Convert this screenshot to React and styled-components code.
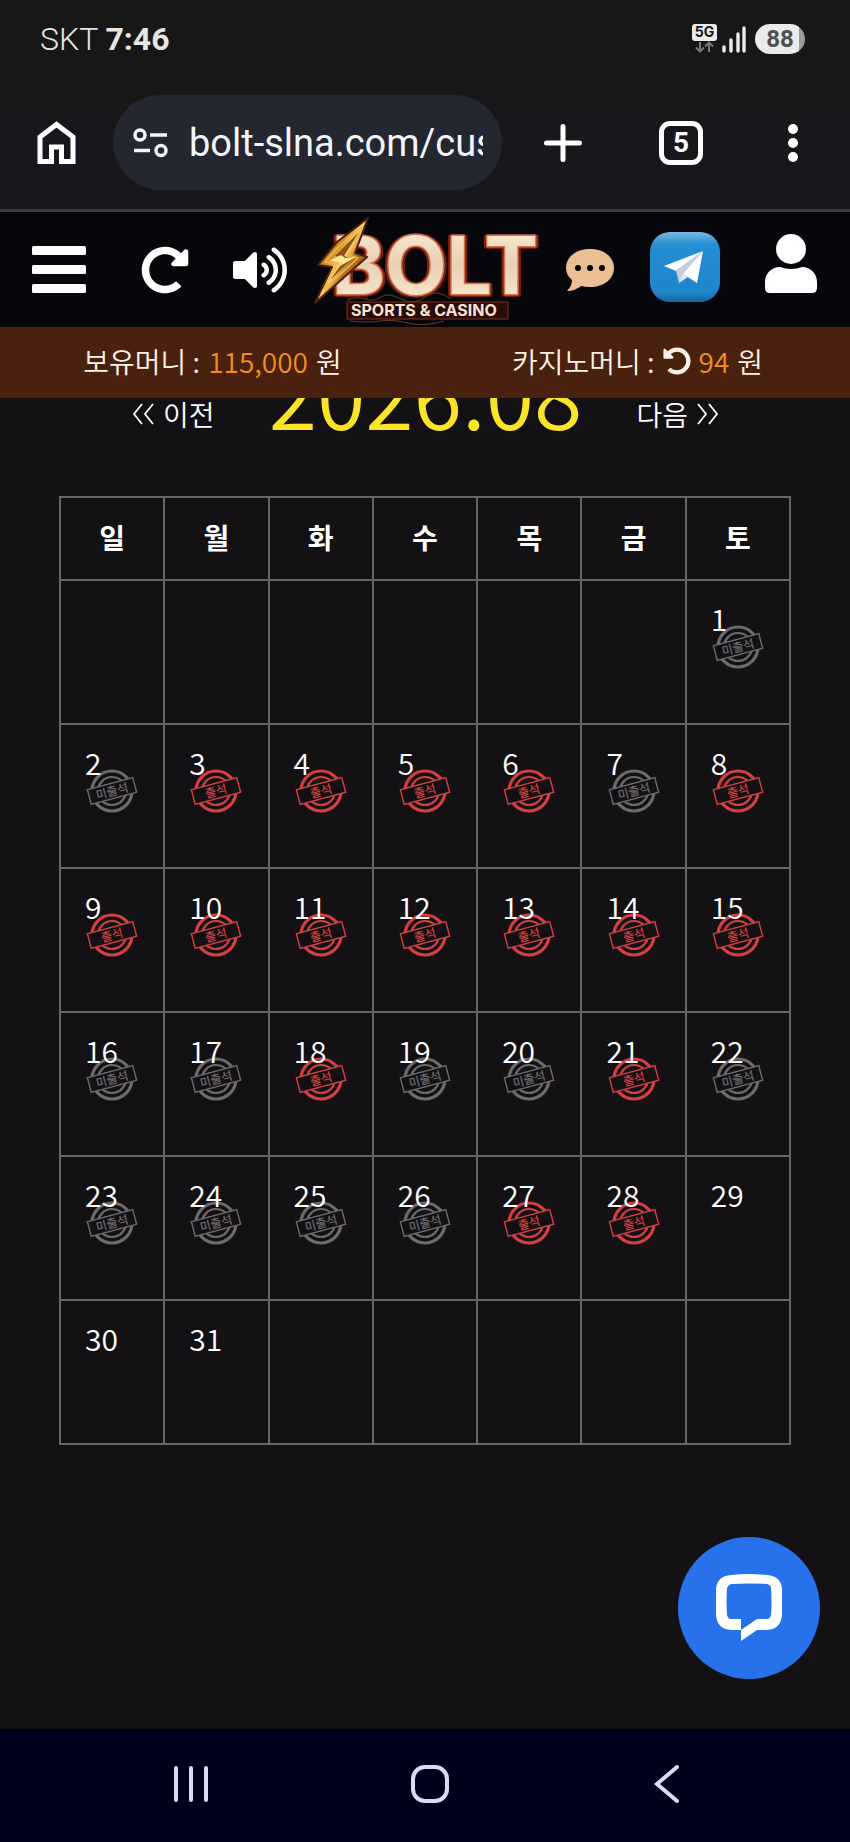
import React from "react";
import styled, { createGlobalStyle } from "styled-components";
import { FaRedoAlt, FaUndoAlt, FaVolumeUp } from "react-icons/fa";

const GlobalStyle = createGlobalStyle`
  * {
    box-sizing: border-box;
  }

  body {
    margin: 0;
    background: #131114;
    color: #fff;
    font-family: "Noto Sans CJK KR", sans-serif;
    font-weight: 350;
  }

  button {
    border: 0;
    padding: 0;
    background: none;
    color: inherit;
    font: inherit;
    cursor: pointer;
  }

  a {
    color: inherit;
    text-decoration: none;
  }

  svg {
    display: block;
    flex: none;
  }
`;

const Phone = styled.div`
  display: flex;
  flex-direction: column;
  min-height: 100vh;
`;

/* phone status bar */
const StatusBar = styled.div`
  display: flex;
  align-items: center;
  justify-content: space-between;
  height: 80px;
  padding: 0 45px 2px 40px;
  background: #171717;
  color: #e6e6e6;
  font-family: Roboto, sans-serif;
  font-size: 32px;
  font-weight: 300;

  b {
    font-weight: 700;
  }
`;

const StatusIcons = styled.div`
  display: flex;
  align-items: center;
  gap: 9px;
`;

const Battery = styled.span`
  width: 50px;
  border-radius: 15px;
  background: linear-gradient(90deg, #ebebeb 88%, #9b9b9b 88%);
  color: #505050;
  font-size: 24px;
  font-weight: 700;
  line-height: 30px;
  text-align: center;
`;

/* browser toolbar */
const BrowserBar = styled.div`
  display: flex;
  align-items: center;
  height: 132px;
  padding: 0 44px 4px 36px;
  background: linear-gradient(#171717, #17171c 40%);
  border-bottom: 3px solid #39393d;
`;

const AddressBar = styled.label`
  display: flex;
  flex: 1;
  align-items: center;
  gap: 20px;
  height: 95px;
  min-width: 0;
  margin: 0 42px 0 36px;
  padding: 0 19px;
  border-radius: 48px;
  background: #242630;

  input {
    flex: 1;
    min-width: 0;
    padding: 0;
    border: 0;
    outline: 0;
    background: none;
    color: #f3f5fb;
    font-family: Roboto, sans-serif;
    font-size: 38px;
    font-weight: 400;
  }
`;

const BrowserTools = styled.div`
  display: flex;
  align-items: center;
  gap: 77px;
`;

const TabCount = styled.button`
  && {
    width: 44px;
    height: 44px;
    border: 5px solid #fff;
    border-radius: 11px;
    font-family: Roboto, sans-serif;
    font-size: 28px;
    font-weight: 700;
    line-height: 34px;
  }
`;

const SiteHeader = styled.header`
  position: relative;
  z-index: 2;
`;

const HeaderRow = styled.div`
  display: grid;
  grid-template-columns: 5fr 4fr 4fr 10fr 4fr 4fr 5fr;
  align-items: center;
  justify-items: center;
  height: 115px;
  background: #07070b;
`;

const MoneyBar = styled.div`
  display: flex;
  align-items: center;
  height: 71px;
  padding-bottom: 4px;
  background: #4a200f;
  font-size: 28px;
`;

const Money = styled.div`
  display: flex;
  flex: 1;
  align-items: center;
  justify-content: center;
  gap: 8px;
  color: #fff4ea;

  strong {
    color: #f0901c;
    font-weight: 350;
  }
`;

/* attendance calendar */
const Main = styled.main`
  position: relative;
  flex: 1;
  padding: 0 59px;
`;

const MonthNav = styled.div`
  display: flex;
  align-items: flex-end;
  justify-content: space-between;
  height: 96px;
  margin: -60px 0 62px;
  padding: 0 72px 0 73px;
  white-space: nowrap;
`;

const MonthLink = styled.a`
  display: flex;
  align-items: center;
  gap: 9px;
  font-size: 28px;
  line-height: 40px;
`;

const Month = styled.h1`
  margin: 0;
  color: #fae428;
  font-size: 88px;
  font-weight: 350;
  line-height: 84px;
`;

const Calendar = styled.table`
  width: 100%;
  table-layout: fixed;
  border-collapse: collapse;

  th,
  td {
    border: 2px solid #666569;
  }

  th {
    height: 83px;
    padding: 0 0 4px;
    font-size: 28px;
    font-weight: 700;
    line-height: 40px;
  }

  td {
    height: 144px;
    padding: 25px 0 0;
    vertical-align: top;
    font-size: 30px;
    line-height: 24px;
  }
`;

const DayNumber = styled.div`
  position: relative;
  z-index: 1;
  padding-left: 24px;
`;

const StampMark = styled.svg`
  margin: -6px auto 0;
  color: ${(props) => (props.$attended ? "#d2403f" : "#6c6a6d")};
`;

const LogoWord = styled.text`
  font-family: Inter, sans-serif;
  font-size: 80px;
  font-weight: 700;
  fill: url(#cream);
  stroke: #cf7650;
  stroke-width: 3px;
  stroke-linejoin: round;
  paint-order: stroke;
  filter: drop-shadow(2px 0 0 #7c1d10) drop-shadow(-2px 0 0 #7c1d10)
    drop-shadow(0 1px 0 #7c1d10);
`;

const ChatButton = styled.button`
  && {
    position: absolute;
    right: 30px;
    bottom: 50px;
    display: flex;
    align-items: center;
    justify-content: center;
    width: 142px;
    height: 142px;
    border-radius: 50%;
    background: #2772ea;
  }
`;

const SystemNav = styled.nav`
  display: flex;
  align-items: center;
  justify-content: space-between;
  height: 113px;
  padding: 0 170px 4px 173px;
  background: #00001d;
`;

const WEEKDAYS = ["일", "월", "화", "수", "목", "금", "토"];
const FIRST_WEEKDAY = 6;
const DAYS_IN_MONTH = 31;
const LAST_STAMPED = 28;
const ATTENDED = [3, 4, 5, 6, 8, 9, 10, 11, 12, 13, 14, 15, 18, 21, 27, 28];

function getWeeks() {
  const weeks = [];
  for (let start = 1 - FIRST_WEEKDAY; start <= DAYS_IN_MONTH; start += 7) {
    weeks.push(
      WEEKDAYS.map((_, i) => {
        const day = start + i;
        return day > 0 && day <= DAYS_IN_MONTH ? day : null;
      })
    );
  }
  return weeks;
}

function Stamp({ attended }) {
  return (
    <StampMark width="52" height="46" viewBox="-26 -23 52 46" $attended={attended}>
      <g fill="none" stroke="currentColor">
        <circle r="20" strokeWidth="3.2" />
        <circle r="14" strokeWidth="2.2" />
      </g>
      <g transform="rotate(-15)">
        <rect
          x="-23.5"
          y="-7.5"
          width="47"
          height="15"
          fill="#131114"
          stroke="currentColor"
          strokeWidth="1.4"
        />
        <text
          y="4.5"
          fill="currentColor"
          fontSize="12"
          fontWeight="500"
          textAnchor="middle"
        >
          {attended ? "출석" : "미출석"}
        </text>
      </g>
    </StampMark>
  );
}

function Logo() {
  return (
    <svg width="230" height="112" viewBox="0 0 230 112">
      <defs>
        <linearGradient id="cream" x1="0" y1="0" x2="0" y2="1">
          <stop offset="0" stopColor="#fff3df" />
          <stop offset="0.5" stopColor="#e9cfb2" />
          <stop offset="1" stopColor="#fff0da" />
        </linearGradient>
        <linearGradient id="gold" x1="0" y1="0" x2="1" y2="1">
          <stop offset="0" stopColor="#8a4c12" />
          <stop offset="0.4" stopColor="#d8902c" />
          <stop offset="0.5" stopColor="#ffd678" />
          <stop offset="0.6" stopColor="#b86f1c" />
          <stop offset="1" stopColor="#7a3e0c" />
        </linearGradient>
      </defs>
      <LogoWord x="22" y="80">
        BOLT
      </LogoWord>
      <path
        d="M58 4 27 28 8 51 22 53 5 89 57 43 45 39Z"
        fill="url(#gold)"
        stroke="#4a210a"
        strokeWidth="2"
        strokeLinejoin="round"
      />
      <path
        d="M53 12 30 31 15 48 28 50 13 76 48 44 38 41Z"
        fill="none"
        stroke="#f3b848"
        strokeWidth="1.4"
      />
      <path d="M49 18 25 42 31 43 34 47 20 66 42 45 34 42Z" fill="#8f5214" />
      <path d="M19 47 31 41 35 44 46 43 30 52 32 48Z" fill="#ffe79b" />
      <path
        d="M37 86q9-4 18-1t16-2 20 2 24-2 26 2M40 107q18 2 30 0t28 2 36-2"
        fill="none"
        stroke="#6b3a14"
        strokeWidth="1"
      />
      <rect x="37" y="88" width="161" height="17" fill="#2a0b08" stroke="#74361f" />
      <text
        x="41"
        y="102"
        fill="#f8e3cf"
        fontFamily="Inter, sans-serif"
        fontSize="16"
        fontWeight="700"
      >
        SPORTS &amp; CASINO
      </text>
    </svg>
  );
}

function TopBars() {
  return (
    <>
      <StatusBar>
        <span>
          SKT <b>7:46</b>
        </span>
        <StatusIcons>
          <svg width="54" height="30" viewBox="0 0 54 30">
            <rect width="25" height="17" rx="3" fill="#ebebeb" />
            <text
              x="12.5"
              y="13"
              fill="#171717"
              fontFamily="Inter, sans-serif"
              fontSize="14"
              fontWeight="700"
              textAnchor="middle"
            >
              5G
            </text>
            <path
              d="M8 18v9M4 23.5l4 4 4-4M17 28v-9M13 22.5l4-4 4 4"
              fill="none"
              stroke="#777"
              strokeWidth="2"
            />
            <path
              d="M32 23v4M39 16v11M46 10v17M52 4v23"
              stroke="#ebebeb"
              strokeWidth="3.4"
              strokeLinecap="round"
            />
          </svg>
          <Battery>88</Battery>
        </StatusIcons>
      </StatusBar>
      <BrowserBar>
        <button aria-label="홈">
          <svg width="41" height="44" viewBox="0 0 41 44">
            <path
              d="M4 40.5V16L20.5 3.5 37 16v24.5H25.5V26h-10v14.5Z"
              fill="none"
              stroke="#fff"
              strokeWidth="5"
            />
          </svg>
        </button>
        <AddressBar>
          <svg width="37" height="30" viewBox="0 0 37 30">
            <g fill="none" stroke="#f3f5fb" strokeWidth="3.5">
              <circle cx="8" cy="7" r="5" />
              <path d="M18 7h17M2 22.5h16" />
              <circle cx="29" cy="22.5" r="5" />
            </g>
          </svg>
          <input aria-label="주소" defaultValue="bolt-slna.com/cus" />
        </AddressBar>
        <BrowserTools>
          <button aria-label="새 탭">
            <svg width="38" height="38" viewBox="0 0 38 38">
              <path
                d="M19 2.5v33M2.5 19h33"
                stroke="#fff"
                strokeWidth="5"
                strokeLinecap="round"
              />
            </svg>
          </button>
          <TabCount aria-label="탭 5개">5</TabCount>
          <button aria-label="메뉴">
            <svg width="26" height="40" viewBox="0 0 26 40" fill="#fff">
              <circle cx="13" cy="6" r="5" />
              <circle cx="13" cy="20" r="5" />
              <circle cx="13" cy="34" r="5" />
            </svg>
          </button>
        </BrowserTools>
      </BrowserBar>
    </>
  );
}

function Header() {
  return (
    <SiteHeader>
      <HeaderRow>
        <button aria-label="전체 메뉴">
          <svg width="54" height="48" viewBox="0 0 54 48" fill="#fff">
            <rect width="54" height="9" rx="1.5" />
            <rect y="19" width="54" height="9" rx="1.5" />
            <rect y="38" width="54" height="9" rx="1.5" />
          </svg>
        </button>
        <button aria-label="새로고침">
          <FaRedoAlt size={48} />
        </button>
        <button aria-label="소리">
          <FaVolumeUp size={54} />
        </button>
        <a href="#home" aria-label="BOLT">
          <Logo />
        </a>
        <button aria-label="문의">
          <svg width="48" height="42" viewBox="0 0 48 42">
            <path
              d="M24 0C38 0 48 8 48 19S38 38 24 38q-5 0-9-1-6 5-14 5 5-5 5-11-6-5-6-12C0 8 10 0 24 0Z"
              fill="#e9bf93"
            />
            <circle cx="12" cy="19" r="3" />
            <circle cx="24" cy="19" r="3" />
            <circle cx="36" cy="19" r="3" />
          </svg>
        </button>
        <a href="#telegram" aria-label="텔레그램">
          <svg width="70" height="76" viewBox="0 0 70 76">
            <defs>
              <linearGradient id="sky" x1="0" y1="0" x2="0" y2="1">
                <stop offset="0" stopColor="#78b9e4" />
                <stop offset="0.18" stopColor="#258dd2" />
                <stop offset="0.85" stopColor="#1f86ce" />
                <stop offset="1" stopColor="#12669f" />
              </linearGradient>
            </defs>
            <rect width="70" height="70" rx="20" fill="url(#sky)" />
            <path d="M53 19 14 34l12 5Z" fill="#fff" />
            <path d="M53 19 26 39l3 12 6-9Z" fill="#c3cfe0" />
            <path d="M53 19 33 42l14 9Z" fill="#fff" />
            <path d="m29 51 4-9 5 3Z" fill="#e2e9f2" />
          </svg>
        </a>
        <button aria-label="내 정보">
          <svg width="52" height="76" viewBox="0 0 52 76" fill="#fff">
            <circle cx="26" cy="17" r="15" />
            <path d="M15 35q11 4 22 0c9 0 15 7 15 15v6q0 5-5 5H5q-5 0-5-5v-6c0-8 6-15 15-15Z" />
          </svg>
        </button>
      </HeaderRow>
      <MoneyBar>
        <Money>
          <span>보유머니 :</span>
          <strong>115,000</strong>
          <span>원</span>
        </Money>
        <Money>
          <span>카지노머니 :</span>
          <FaUndoAlt size={28} />
          <strong>94</strong>
          <span>원</span>
        </Money>
      </MoneyBar>
    </SiteHeader>
  );
}

export default function App() {
  return (
    <Phone>
      <GlobalStyle />
      <TopBars />
      <Header />
      <Main>
        <MonthNav>
          <MonthLink href="#prev">
            <svg width="22" height="22" viewBox="0 0 22 22">
              <path
                d="M10 1 2 11l8 10M21 1l-8 10 8 10"
                fill="none"
                stroke="#fff"
                strokeWidth="1.8"
              />
            </svg>
            이전
          </MonthLink>
          <Month>2026.08</Month>
          <MonthLink href="#next">
            다음
            <svg width="22" height="22" viewBox="0 0 22 22">
              <path
                d="m1 1 8 10-8 10M12 1l8 10-8 10"
                fill="none"
                stroke="#fff"
                strokeWidth="1.8"
              />
            </svg>
          </MonthLink>
        </MonthNav>
        <Calendar>
          <thead>
            <tr>
              {WEEKDAYS.map((name) => (
                <th key={name}>{name}</th>
              ))}
            </tr>
          </thead>
          <tbody>
            {getWeeks().map((week, row) => (
              <tr key={row}>
                {week.map((day, i) => (
                  <td key={i}>
                    {day && <DayNumber>{day}</DayNumber>}
                    {day && day <= LAST_STAMPED && (
                      <Stamp attended={ATTENDED.includes(day)} />
                    )}
                  </td>
                ))}
              </tr>
            ))}
          </tbody>
        </Calendar>
        <ChatButton aria-label="채팅 상담">
          <svg width="66" height="68" viewBox="0 0 66 68">
            <path
              d="M15 1q18-2 36 0 14 1 15 14 1 13 0 26-1 14-15 15H41L25 67V45H15q-3 0-4-4-1-14 0-27 1-3 4-4 18-1 36 0 4 1 4 4 1 13 0 27-1 4-4 4H41L25 56H15Q1 55 0 41-1 28 0 15 1 2 15 1Z"
              fill="#fff"
              fillRule="evenodd"
            />
          </svg>
        </ChatButton>
      </Main>
      <SystemNav>
        <button aria-label="최근 앱">
          <svg width="36" height="38" viewBox="0 0 36 38">
            <path
              d="M3 3v32M18 3v32M33 3v32"
              stroke="#dcdcf0"
              strokeWidth="4"
              strokeLinecap="round"
            />
          </svg>
        </button>
        <button aria-label="홈 화면">
          <svg width="38" height="38" viewBox="0 0 38 38">
            <rect
              x="2"
              y="2"
              width="34"
              height="34"
              rx="12"
              fill="none"
              stroke="#dcdcf0"
              strokeWidth="4"
            />
          </svg>
        </button>
        <button aria-label="뒤로">
          <svg width="30" height="38" viewBox="0 0 30 38">
            <path
              d="M27 2 7 19l20 17"
              fill="none"
              stroke="#dcdcf0"
              strokeWidth="4"
              strokeLinecap="round"
            />
          </svg>
        </button>
      </SystemNav>
    </Phone>
  );
}
